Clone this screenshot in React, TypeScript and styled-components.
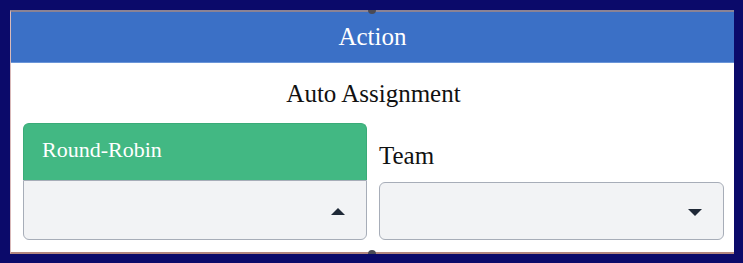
import styled, { createGlobalStyle } from "styled-components";

const GlobalStyle = createGlobalStyle`
  html, body {
    margin: 0;
    padding: 0;
    background: #0b0a6a;
  }
  body {
    padding: 10px 9px 0 10px;
    font-family: "Liberation Serif", "Times New Roman", serif;
  }
`;

const Panel = styled.section`
  position: relative;
  width: 724px;
  background: #fff;
  border-top: 2px solid #8a8294;
  border-bottom: 2px solid #b3877f;
  border-left: 1px solid #d9b9b9;
  box-sizing: border-box;
`;

const Handle = styled.span<{ $bottom?: boolean }>`
  position: absolute;
  left: 357px;
  ${(p) => (p.$bottom ? "bottom: -2px;" : "top: -2px;")}
  width: 8px;
  height: 4px;
  background: #4a4a55;
  border-radius: ${(p) => (p.$bottom ? "4px 4px 0 0" : "0 0 4px 4px")};
`;

const Header = styled.header`
  height: 50px;
  background: #3b70c6;
  border-bottom: 1px solid #6a95d8;
  display: flex;
  align-items: center;
  justify-content: center;
  color: #fff;
  font-size: 25px;
`;

const Body = styled.div`
  padding: 16px 10px 12px 12px;
`;

const Title = styled.h2`
  margin: 0 0 15px;
  text-align: center;
  font-weight: 400;
  font-size: 25px;
  line-height: 29px;
  color: #111;
`;

const Columns = styled.div`
  display: grid;
  grid-template-columns: 344px 345px;
  gap: 12px;
  align-items: end;
`;

const Field = styled.div`
  display: flex;
  flex-direction: column;
`;

const Label = styled.label`
  font-size: 25px;
  line-height: 28px;
  color: #111;
  margin-bottom: 12px;
`;

const Option = styled.div`
  height: 57px;
  box-sizing: border-box;
  background: #42b883;
  border: 1px solid #3aab78;
  border-bottom: none;
  border-radius: 6px 6px 0 0;
  color: #fff;
  font-size: 22px;
  display: flex;
  align-items: center;
  padding: 0 18px 4px;
`;

const Select = styled.div<{ $open?: boolean; $tall?: boolean }>`
  height: ${(p) => (p.$tall ? "60px" : "58px")};
  box-sizing: border-box;
  background: #f2f3f5;
  border: 1px solid #a7adb8;
  border-radius: ${(p) => (p.$open ? "0 0 6px 6px" : "6px")};
  display: flex;
  align-items: center;
  justify-content: flex-end;
  padding: 2px 21px 0 0;
`;

const Arrow = styled.span<{ $up?: boolean }>`
  width: 0;
  height: 0;
  border-left: 7px solid transparent;
  border-right: 7px solid transparent;
  ${(p) =>
    p.$up ? "border-bottom: 7px solid #1f2937;" : "border-top: 7px solid #1f2937;"}
`;

export default function App() {
  return (
    <>
      <GlobalStyle />
      <Panel>
        <Handle />
        <Header>Action</Header>
        <Body>
          <Title>Auto Assignment</Title>
          <Columns>
            <Field>
              <Option>Round-Robin</Option>
              <Select $open $tall>
                <Arrow $up />
              </Select>
            </Field>
            <Field>
              <Label>Team</Label>
              <Select>
                <Arrow />
              </Select>
            </Field>
          </Columns>
        </Body>
        <Handle $bottom />
      </Panel>
    </>
  );
}
